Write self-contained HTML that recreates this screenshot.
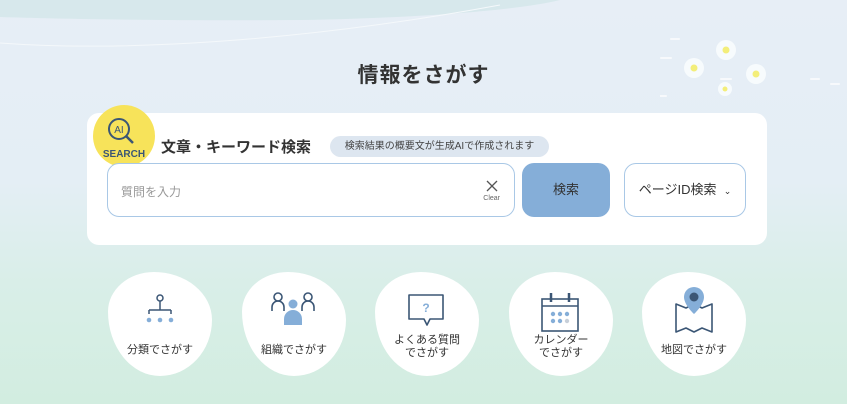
<!DOCTYPE html>
<html><head><meta charset="utf-8"><style>
*{margin:0;padding:0;box-sizing:border-box}
body{width:847px;height:404px;overflow:hidden;font-family:"Liberation Sans","Noto Sans CJK JP",sans-serif;position:relative;background:linear-gradient(180deg,#e7eef6 0%,#e4eef5 45%,#d9eee8 70%,#d2ede0 100%);color:#333}
h1{position:absolute;left:0;width:847px;top:59px;text-align:center;font-size:21px;font-weight:bold;color:#333;letter-spacing:1px}
.card{position:absolute;left:87px;top:113px;width:680px;height:132px;background:#fff;border-radius:12px}
.badge{position:absolute;left:93px;top:105px;width:62px;height:62px;border-radius:50%;background:#f7e35a}
.ttl{position:absolute;left:161px;top:136px;font-size:15px;font-weight:bold;color:#333}
.pill{position:absolute;left:330px;top:136px;width:219px;height:21px;border-radius:11px;background:#dde6f0;font-size:10px;line-height:21px;text-align:center;color:#444}
.inp{position:absolute;left:107px;top:163px;width:408px;height:54px;border:1px solid #a9c8e6;border-radius:12px;background:#fff}
.inp span{position:absolute;left:13px;top:19px;font-size:12px;color:#999}
.clr{position:absolute;right:14px;top:16px;text-align:center;font-size:7px;color:#666;line-height:8px}
.btn{position:absolute;left:522px;top:163px;width:88px;height:54px;border-radius:12px;background:#85aed8;font-size:13px;text-align:center;line-height:54px;color:#333}
.pid{position:absolute;left:624px;top:163px;width:122px;height:54px;border-radius:12px;border:1px solid #a9c8e6;background:#fff;font-size:13px;line-height:52px;text-align:center;color:#333}
.tile{position:absolute;top:272px;width:104px;height:104px;background:#fff;border-radius:44% 56% 50% 50%/38% 46% 54% 62%}
.tile svg{position:absolute;left:30px;top:18px}
.tile p{position:absolute;left:0;width:100%;text-align:center;font-size:11px;line-height:13px;color:#333}
</style></head><body>
<svg style="position:absolute;left:0;top:0" width="847" height="60">
<path d="M0 0H560C520 10 420 18 300 20C180 21 60 19 0 17Z" fill="#d7e8ec"/>
<path d="M0 43C120 52 300 42 500 5" fill="none" stroke="#f4f8fb" stroke-width="1"/>
</svg>
<svg style="position:absolute;left:660px;top:30px" width="187" height="90">
<g fill="#fff" opacity=".7"><rect x="-17" y="4" width="12" height="2" rx="1"/><rect x="10" y="8" width="10" height="2" rx="1"/><rect x="0" y="27" width="12" height="2" rx="1"/><rect x="60" y="48" width="12" height="2" rx="1"/><rect x="-5" y="65" width="12" height="2" rx="1"/><rect x="150" y="48" width="10" height="2" rx="1"/><rect x="170" y="53" width="10" height="2" rx="1"/></g>
<g fill="#f7fbfd"><circle cx="34" cy="38" r="10"/><circle cx="66" cy="20" r="10"/><circle cx="96" cy="44" r="10"/><circle cx="65" cy="59" r="7"/></g>
<g fill="#f3ee7a"><circle cx="34" cy="38" r="3.5"/><circle cx="66" cy="20" r="3.5"/><circle cx="96" cy="44" r="3.5"/><circle cx="65" cy="59" r="2.5"/></g>
</svg>
<h1>情報をさがす</h1>
<div class="card"></div>
<div class="badge"><svg width="62" height="62"><circle cx="26" cy="24" r="10" fill="none" stroke="#3b5675" stroke-width="2"/><line x1="33" y1="31" x2="40" y2="38" stroke="#3b5675" stroke-width="2.5"/><text x="26" y="28" font-size="10" text-anchor="middle" fill="#3b5675" font-family="Liberation Sans">AI</text><text x="31" y="52" font-size="10" font-weight="bold" text-anchor="middle" fill="#3b5675" font-family="Liberation Sans">SEARCH</text></svg></div>
<div class="ttl">文章・キーワード検索</div>
<div class="pill">検索結果の概要文が生成AIで作成されます</div>
<div class="inp"><span>質問を入力</span><div class="clr"><svg width="12" height="12"><path d="M1 1L11 11M11 1L1 11" stroke="#555" stroke-width="1.3"/></svg><br>Clear</div></div>
<div class="btn">検索</div>
<div class="pid">ページID検索 &nbsp;<span style="font-size:9px">&#8964;</span></div>

<div class="tile" style="left:108px"><svg width="40" height="40" style="left:32px"><circle cx="20" cy="8" r="3" fill="none" stroke="#3b5675" stroke-width="1.5"/><path d="M20 11V20M9 20H31M9 20V24M31 20V24" stroke="#3b5675" stroke-width="1.5" fill="none"/><g fill="#85aed8"><circle cx="9" cy="30" r="2.3"/><circle cx="20" cy="30" r="2.3"/><circle cx="31" cy="30" r="2.3"/></g></svg><p style="top:72px">分類でさがす</p></div>
<div class="tile" style="left:242px"><svg width="46" height="44" style="left:28px;top:17px"><g fill="none" stroke="#3b5675" stroke-width="1.6"><circle cx="8" cy="8" r="4"/><path d="M2 22V18a6 6 0 0 1 12 0v4"/><circle cx="38" cy="8" r="4"/><path d="M32 22V18a6 6 0 0 1 12 0v4"/></g><g fill="#85aed8"><circle cx="23" cy="15" r="4.5"/><path d="M14 36V30a9 9 0 0 1 18 0v6z"/></g></svg><p style="top:72px">組織でさがす</p></div>
<div class="tile" style="left:375px"><svg width="44" height="44" style="left:30px;top:20px"><path d="M4 3H38V27H25L22 33L19 27H4Z" fill="none" stroke="#3b5675" stroke-width="1.6" stroke-linejoin="round"/><text x="21" y="20" font-size="12" font-weight="bold" fill="#85aed8" text-anchor="middle" font-family="Liberation Sans">?</text></svg><p style="top:62px">よくある質問<br>でさがす</p></div>
<div class="tile" style="left:509px"><svg width="44" height="44" style="left:30px;top:19px"><rect x="3" y="8" width="36" height="32" fill="none" stroke="#3b5675" stroke-width="1.6"/><path d="M3 15H39" stroke="#3b5675" stroke-width="1.6"/><path d="M12 2V11M30 2V11" stroke="#3b5675" stroke-width="2.5"/><g fill="#85aed8"><circle cx="14" cy="23" r="2.2"/><circle cx="21" cy="23" r="2.2"/><circle cx="28" cy="23" r="2.2"/><circle cx="14" cy="30" r="2.2"/><circle cx="21" cy="30" r="2.2"/></g><circle cx="28" cy="30" r="2.2" fill="#c7cfd9"/></svg><p style="top:62px">カレンダー<br>でさがす</p></div>
<div class="tile" style="left:642px"><svg width="44" height="50" style="left:30px;top:14px"><path d="M4 18L14 22L22 18L30 22L40 18V46L30 42L22 46L14 42L4 46Z" fill="none" stroke="#3b5675" stroke-width="1.6" stroke-linejoin="round"/><path d="M22 1a10 10 0 0 1 10 10c0 8-10 17-10 17s-10-9-10-17a10 10 0 0 1 10-10z" fill="#85aed8"/><circle cx="22" cy="11" r="4.5" fill="#3b5675"/></svg><p style="top:72px">地図でさがす</p></div>
</body></html>
